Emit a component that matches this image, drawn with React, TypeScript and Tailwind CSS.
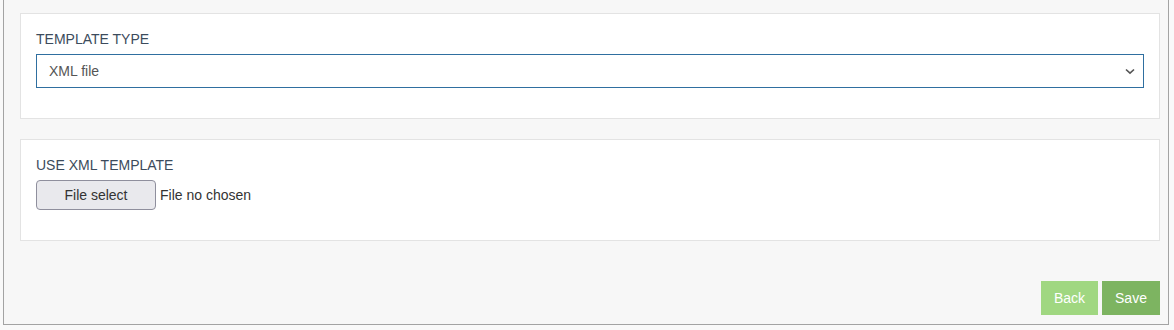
export default function App() {
  return (
    <div className="min-h-[330px] w-[1174px] bg-[#f9f9f9] font-['Liberation_Sans',Arial,sans-serif]">
      <div className="ml-[3px] w-[1166px] border-x border-b border-[#a3a3a3] bg-[#f7f7f7] pt-[13px] pl-4 pr-2 pb-[9px]">
        <div className="border border-[#e3e3e3] bg-white px-[15px] pt-4 pb-[30px]">
          <div className="text-[14px] leading-[18px] text-[#3c4b5c]">TEMPLATE TYPE</div>
          <div className="mt-[6px] flex h-[34px] items-center justify-between border border-[#2f6fa0] pl-3 pr-[8px]">
            <span className="text-[14px] text-[#555]">XML file</span>
            <svg width="10" height="7" viewBox="0 0 10 7" className="text-[#555]">
              <path d="M1 1.5 L5 5.2 L9 1.5" fill="none" stroke="currentColor" strokeWidth="1.6" />
            </svg>
          </div>
        </div>

        <div className="mt-[20px] border border-[#e3e3e3] bg-white px-[15px] pt-4 pb-[30px]">
          <div className="text-[14px] leading-[18px] text-[#3c4b5c]">USE XML TEMPLATE</div>
          <div className="mt-[6px] flex items-center gap-1">
            <button className="h-[30px] w-[120px] rounded-[4px] border border-[#8f8f9d] bg-[#e9e9ed] text-[14px] text-[#333]">
              File select
            </button>
            <span className="text-[14px] text-[#333]">File no chosen</span>
          </div>
        </div>

        <div className="mt-[40px] flex justify-end gap-1">
          <button className="h-[34px] w-[57px] bg-[#a0d781] text-[14px] text-white">Back</button>
          <button className="h-[34px] w-[58px] bg-[#7db461] text-[14px] text-white">Save</button>
        </div>
      </div>
    </div>
  );
}
